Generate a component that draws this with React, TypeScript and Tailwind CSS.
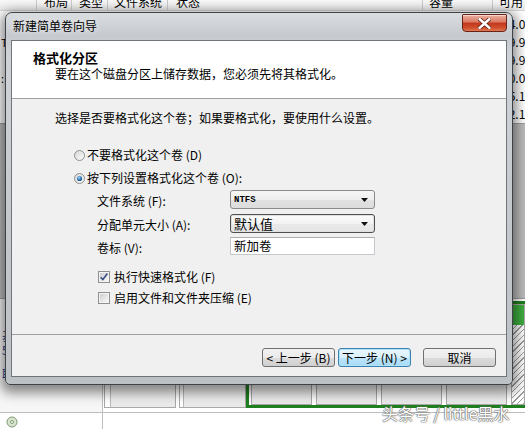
import React from "react";

// Win7 style controls

const Radio = ({ checked }: { checked?: boolean }) => (
  <svg width="11" height="11" viewBox="0 0 11 11" className="shrink-0">
    <defs>
      <linearGradient id={checked ? "rbOn" : "rbOff"} x1="0" y1="0" x2="1" y2="1">
        <stop offset="0" stopColor="#d8d8d8" />
        <stop offset="1" stopColor="#fbfbfb" />
      </linearGradient>
      <radialGradient id="rbDot" cx="0.4" cy="0.35" r="0.7">
        <stop offset="0" stopColor="#a8d6f6" />
        <stop offset="0.6" stopColor="#2f79b8" />
        <stop offset="1" stopColor="#1b4d7c" />
      </radialGradient>
    </defs>
    <circle cx="5.5" cy="5.5" r="5" fill={checked ? "url(#rbOn)" : "url(#rbOff)"} stroke="#8e8f8f" strokeWidth="1" />
    {checked && <circle cx="5.5" cy="5.5" r="2.6" fill="url(#rbDot)" />}
  </svg>
);

const Checkbox = ({ checked }: { checked?: boolean }) => (
  <svg width="12" height="12" viewBox="0 0 12 12" className="shrink-0">
    <defs>
      <linearGradient id="cbFill" x1="0" y1="0" x2="1" y2="1">
        <stop offset="0" stopColor="#cfcfcf" />
        <stop offset="1" stopColor="#f8f8f8" />
      </linearGradient>
    </defs>
    <rect x="0.5" y="0.5" width="11" height="11" fill="#f4f4f4" stroke="#8e8f8f" />
    <rect x="2" y="2" width="8" height="8" fill="url(#cbFill)" />
    {checked && <path d="M2.6 6.2 L4.9 8.6 L9.4 2.6" fill="none" stroke="#3b4f86" strokeWidth="1.6" />}
  </svg>
);

const ComboArrow = () => (
  <svg width="7" height="4" viewBox="0 0 7 4" className="ml-auto shrink-0">
    <polygon points="0,0 7,0 3.5,4" fill="#111" />
  </svg>
);

const CloseButton = () => (
  <div className="mt-[1px] ml-auto flex h-[18px] w-[45px] items-center justify-center rounded-b-[4px] rounded-t-[1px] border border-[#6c2317] bg-[linear-gradient(180deg,#eab0a2_0%,#dc7c66_42%,#c2391d_52%,#cf4f2d_80%,#e07a52_100%)] shadow-[inset_0_1px_0_rgba(255,255,255,0.5)]">
    <svg width="13" height="11" viewBox="0 0 13 11">
      <path d="M1.5 1 L11.5 10 M11.5 1 L1.5 10" stroke="#5a1d12" strokeWidth="4" strokeLinecap="round" />
      <path d="M1.5 1 L11.5 10 M11.5 1 L1.5 10" stroke="#ffffff" strokeWidth="2.4" strokeLinecap="round" />
    </svg>
  </div>
);

const listRows = [
  { left: "", free: "24.06 GB" },
  { left: "T", free: "39.98 GB" },
  { left: "", free: "49.95 GB" },
  { left: ":", free: "10.04 GB" },
  { left: "", free: "65.12 GB" },
  { left: "", free: "92.15 GB" },
];

const cellFill = "flex-1 bg-[linear-gradient(180deg,#ffffff_0%,#ffffff_60%,#e9e9e9_100%)]";

const Background = () => (
  <div className="flex h-full w-full flex-col bg-white text-[12px] text-black">
    {/* column headers */}
    <div className="-mt-[6px] flex h-[17px] shrink-0 border-b border-[#d5d5d5] bg-[linear-gradient(180deg,#ffffff_0%,#f3f3f3_60%,#e9e9e9_100%)] leading-[16px]">
      <div className="w-[37px] shrink-0 border-r border-[#c9c9c9]" />
      <div className="w-[35px] shrink-0 border-r border-[#c9c9c9] pl-[7px]">布局</div>
      <div className="w-[36px] shrink-0 border-r border-[#c9c9c9] pl-[7px]">类型</div>
      <div className="w-[60px] shrink-0 border-r border-[#c9c9c9] pl-[6px]">文件系统</div>
      <div className="w-[255px] shrink-0 border-r border-[#c9c9c9] pl-[8px]">状态</div>
      <div className="w-[70px] shrink-0 border-r border-[#c9c9c9] pl-[6px]">容量</div>
      <div className="flex-1 whitespace-nowrap pl-[6px]">可用</div>
    </div>

    {/* volume list */}
    <div className="flex shrink-0 flex-col pt-[4px]">
      {listRows.map((r, i) => (
        <div key={i} className="flex h-[18px] items-center overflow-hidden leading-[18px]">
          <div className="w-[37px] shrink-0 pl-[1px] text-[11px]">{r.left}</div>
          <div className="w-[456px] shrink-0" />
          <div className="shrink-0 whitespace-nowrap pl-[9px]">{r.free}</div>
        </div>
      ))}
    </div>

    {/* splitter / empty area */}
    <div className="h-[176px] shrink-0 border-y border-[#9d9d9d] bg-[linear-gradient(90deg,#bdbdbd_0%,#d2d2d2_50%,#bdbdbd_100%)]" />

    {/* disk 0 */}
    <div className="flex h-[114px] shrink-0 border-b border-[#bdbdbd]">
      <div className="flex w-[103px] shrink-0 flex-col border-r border-[#bdbdbd] bg-[#f6f6f6] pl-[2px] pt-[30px] text-[12px] leading-[14px] text-[#1e3c8c]">
        <span>基本</span>
        <span>59.62 GB</span>
        <span className="mt-[10px]">联机</span>
      </div>
      <div className="flex flex-1 pb-[4px] pt-[2px]">
        <div className="ml-[1px] flex w-[72px] shrink-0 flex-col border border-[#a8a8a8]">
          <div className="h-[8px] bg-[#23378f]" />
          <div className={`ml-[5px] border-l border-[#b8b8b8] ${cellFill}`} />
        </div>
        <div className="ml-[3px] flex w-[67px] shrink-0 flex-col border border-[#a8a8a8]">
          <div className="h-[8px] bg-[#23378f]" />
          <div className={`ml-[3px] border-l border-[#b8b8b8] ${cellFill}`} />
        </div>
        <div className="flex flex-1 border-[3px] border-r-0 border-[#1f7f1f]">
          <div className="ml-[2px] flex w-[61px] shrink-0 flex-col border border-[#a8a8a8]">
            <div className="h-[8px] bg-[#23378f]" />
            <div className={cellFill} />
          </div>
          <div className="ml-[4px] flex w-[61px] shrink-0 flex-col border border-[#a8a8a8]">
            <div className="h-[8px] bg-[#23378f]" />
            <div className={cellFill} />
          </div>
          <div className="ml-[4px] flex w-[61px] shrink-0 flex-col border border-[#a8a8a8]">
            <div className="h-[8px] bg-[#23378f]" />
            <div className={cellFill} />
          </div>
          <div className="ml-[4px] flex w-[61px] shrink-0 flex-col border border-[#a8a8a8]">
            <div className="h-[8px] bg-[#23378f]" />
            <div className={cellFill} />
          </div>
          <div className="ml-[4px] flex flex-1 flex-col border border-[#a8a8a8]">
            <div className="h-[20px] bg-[#3fae3f]" />
            <div className="flex-1 bg-[repeating-linear-gradient(135deg,#ffffff_0px,#ffffff_3px,#9a9a9a_3px,#9a9a9a_4px)]" />
          </div>
        </div>
      </div>
    </div>

    {/* next disk */}
    <div className="flex flex-1">
      <div className="w-[103px] shrink-0 border-r border-[#bdbdbd] bg-white pl-[6px] pt-[3px]">
        <svg width="12" height="12" viewBox="0 0 12 12">
          <circle cx="6" cy="6" r="5" fill="#d9e4d0" stroke="#7d9a6e" />
          <circle cx="6" cy="6" r="1.5" fill="#fff" stroke="#7d9a6e" />
        </svg>
      </div>
      <div className="flex-1 bg-white" />
    </div>
  </div>
);

const Dialog = () => (
  <div className="absolute left-[5px] top-[12px] flex h-[373px] w-[508px] flex-col rounded-t-[7px] rounded-b-[5px] border border-[#3e4348] bg-[linear-gradient(180deg,#dadde0_0%,#c6cacf_6%,#cfd3d7_12%,#c4c8cc_60%,#bcc1c6_100%)] px-[5px] pb-[7px] shadow-[0_4px_12px_4px_rgba(0,0,0,0.45)]">
    {/* title bar */}
    <div className="flex h-[27px] shrink-0 items-start">
      <span className="mt-[5px] ml-[2px] text-[12px] leading-[16px] text-black [text-shadow:0_0_6px_rgba(255,255,255,0.9)]">新建简单卷向导</span>
      <CloseButton />
    </div>

    {/* client area */}
    <div className="flex flex-1 flex-col border border-[#6f757b] bg-[#f0f0f0] text-[12px] text-black">
      <div className="h-[58px] shrink-0 border-b border-[#a0a0a0] bg-white pl-[21px] pt-[9px]">
        <div className="text-[13px] font-bold leading-[16px]">格式化分区</div>
        <div className="pl-[22px] leading-[15px]">要在这个磁盘分区上储存数据，您必须先将其格式化。</div>
      </div>

      <div className="flex h-[235px] shrink-0 flex-col pl-[43px]">
        <div className="mt-[11px] leading-[16px]">选择是否要格式化这个卷；如果要格式化，要使用什么设置。</div>

        <div className="ml-[19px] mt-[21px] flex h-[16px] items-center gap-[2px] leading-[16px]">
          <Radio />
          <span>不要格式化这个卷 (D)</span>
        </div>
        <div className="ml-[19px] mt-[7px] flex h-[16px] items-center gap-[2px] leading-[16px]">
          <Radio checked />
          <span>按下列设置格式化这个卷 (O):</span>
        </div>

        <div className="ml-[42px] mt-[4px] flex flex-col">
          <div className="flex h-[19px] items-center">
            <span className="mt-[3px] w-[133px] leading-[16px]">文件系统 (F):</span>
            <div className="flex h-[19px] w-[145px] items-center rounded-[3px] border border-[#8a8a8a] bg-[linear-gradient(180deg,#f6f6f6_0%,#eeeeee_50%,#e2e2e2_52%,#dcdcdc_100%)] pl-[3px] pr-[6px]">
              <span className="font-['Liberation_Mono',monospace] text-[9px] font-bold leading-[12px]">NTFS</span>
              <ComboArrow />
            </div>
          </div>
          <div className="mt-[5px] flex h-[19px] items-center">
            <span className="mt-[3px] w-[133px] leading-[16px]">分配单元大小 (A):</span>
            <div className="flex h-[19px] w-[145px] items-center rounded-[3px] border border-[#4f4f4f] bg-[linear-gradient(180deg,#fbfbfb_0%,#f3f3f3_50%,#e9e9e9_52%,#e4e4e4_100%)] pl-[3px] pr-[6px] shadow-[inset_0_0_0_1px_#e0e0e0]">
              <span className="text-[13px] leading-[16px]">默认值</span>
              <ComboArrow />
            </div>
          </div>
          <div className="mt-[4px] flex h-[18px] items-center">
            <span className="mt-[3px] w-[133px] leading-[16px]">卷标 (V):</span>
            <div className="flex h-[18px] w-[145px] items-center border border-[#c5c8cd] border-t-[#abadb3] bg-white pl-[3px]">
              <span className="text-[12.5px] leading-[16px]">新加卷</span>
            </div>
          </div>
        </div>

        <div className="ml-[43px] mt-[14px] flex h-[16px] items-center gap-[4px] leading-[16px]">
          <Checkbox checked />
          <span>执行快速格式化 (F)</span>
        </div>
        <div className="ml-[43px] mt-[5px] flex h-[16px] items-center gap-[4px] leading-[16px]">
          <Checkbox />
          <span>启用文件和文件夹压缩 (E)</span>
        </div>
      </div>

      <div className="flex flex-1 items-start justify-end border-t border-[#a0a0a0] pr-[10px] pt-[13px]">
        <button className="flex h-[19px] w-[73px] items-center justify-center rounded-[3px] border border-[#707070] bg-[linear-gradient(180deg,#f2f2f2_0%,#ebebeb_50%,#dddddd_51%,#cfcfcf_100%)] leading-[16px]">
          &lt; 上一步 (B)
        </button>
        <button className="ml-[3px] flex h-[19px] w-[73px] items-center justify-center rounded-[3px] border border-[#3c7fb1] bg-[linear-gradient(180deg,#eaf6fd_0%,#d9f0fc_50%,#bee6fd_51%,#a7d9f5_100%)] leading-[16px] shadow-[inset_0_0_0_1px_#aee3f8]">
          下一步 (N) &gt;
        </button>
        <button className="ml-[12px] flex h-[19px] w-[73px] items-center justify-center rounded-[3px] border border-[#707070] bg-[linear-gradient(180deg,#f2f2f2_0%,#ebebeb_50%,#dddddd_51%,#cfcfcf_100%)] leading-[16px]">
          取消
        </button>
      </div>
    </div>
  </div>
);

const App = () => {
  return (
    <div className="relative h-[429px] w-[525px] overflow-hidden font-['Noto_Sans_CJK_SC','Noto_Sans',sans-serif]">
      <Background />
      <Dialog />
      {/* watermark */}
      <div className="absolute left-[382px] top-[403px] whitespace-nowrap text-[16px] leading-[20px] text-white [text-shadow:0_0_1px_#555,0_0_1px_#555,0_0_2px_#777]">
        头条号 / little黑水
      </div>
    </div>
  );
};

export default App;
